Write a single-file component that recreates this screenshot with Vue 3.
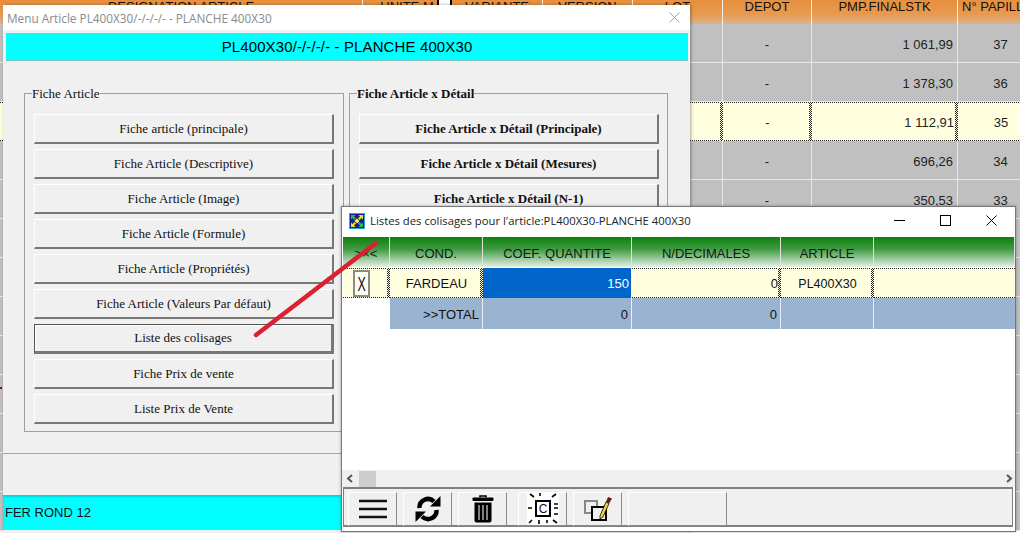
<script setup>
const bgCols = [
  { w: 363, t: 'DESIGNATION ARTICLE' },
  { w: 89, t: 'UNITE M' },
  { w: 91, t: 'VARIANTE' },
  { w: 90, t: 'VERSION' },
  { w: 90, t: 'LOT' },
  { w: 89, t: 'DEPOT' },
  { w: 146, t: 'PMP.FINALSTK' },
  { w: 86, t: 'N° PAPILLE' }
]
const bgRows = [
  ['1 061,99', '37'], ['1 378,30', '36'], ['1 112,91', '35'], ['696,26', '34'], ['350,53', '33'],
  ['', ''], ['', ''], ['', ''], ['', ''], ['', ''], ['', ''], ['', ''], ['', '']
]
const left = ['Fiche article (principale)', 'Fiche Article (Descriptive)', 'Fiche Article (Image)', 'Fiche Article (Formule)', 'Fiche Article (Propriétés)', 'Fiche Article (Valeurs Par défaut)', 'Liste des colisages', 'Fiche Prix de vente', 'Liste Prix de Vente']
const right = ['Fiche Article x Détail (Principale)', 'Fiche Article x Détail (Mesures)', 'Fiche Article x Détail (N-1)', '', '', '', '', '', '']
const heads = ['>×<', 'COND.', 'COEF. QUANTITE', 'N/DECIMALES', 'ARTICLE', '']
</script>

<template>
  <div class="desk">
    <div class="bg-grid">
      <div class="bg-head">
        <div v-for="c in bgCols" :key="c.t" class="bg-hcell" :style="{ width: c.w + 'px' }">{{ c.t }}</div>
      </div>
      <div v-for="(r, i) in bgRows" :key="i" class="bg-row" :class="{ cur: i === 2 }">
        <div class="bg-cell" v-for="n in 5" :key="n" :style="{ width: bgCols[n - 1].w + 'px' }"></div>
        <div class="bg-cell center" :style="{ width: bgCols[5].w + 'px' }">{{ r[0] ? '-' : '' }}</div>
        <div class="bg-cell num" :style="{ width: bgCols[6].w + 'px' }">{{ r[0] }}</div>
        <div class="bg-cell center" :style="{ width: bgCols[7].w + 'px' }">{{ r[1] }}</div>
      </div>
    </div>
    <span class="check"></span>
    <span class="redmark"></span>

    <section class="menu-win">
      <header class="menu-title">
        <span>Menu Article PL400X30/-/-/-/- - PLANCHE 400X30</span>
        <svg class="menu-x" width="11" height="11" viewBox="0 0 11 11"><path d="M.5.5l10 10M10.5.5l-10 10" stroke="#a0a0a0" fill="none"/></svg>
      </header>
      <div class="menu-body">
        <div class="band">PL400X30/-/-/-/- - PLANCHE 400X30</div>
        <div class="groups">
          <fieldset class="group g1">
            <legend>Fiche Article</legend>
            <button v-for="b in left" :key="b" class="btn" :class="{ focus: b === 'Liste des colisages' }">{{ b }}</button>
          </fieldset>
          <fieldset class="group g2">
            <legend class="bold">Fiche Article x Détail</legend>
            <button v-for="(b, i) in right" :key="i" class="btn bold">{{ b }}</button>
          </fieldset>
        </div>
        <div class="sep"></div>
        <div class="footer">FER ROND 12</div>
      </div>
    </section>

    <section class="col-win">
      <header class="col-title">
        <svg class="app-ico" width="16" height="16" viewBox="0 0 16 16">
          <rect width="16" height="16" fill="#12248c"/>
          <rect x=".5" y=".5" width="15" height="15" fill="none" stroke="#2aa6d8"/>
          <path d="M2 2h4.500L5 3.500l2 2L5.500 7l-2-2L2 6.500z" fill="#35b54a"/>
          <path d="M14 2v4.500L12.500 5l-2 2L9 5.500l2-2L9.500 2z" fill="#f0dc30"/>
          <path d="M2 14V9.500L3.500 11l2-2L7 10.500l-2 2L6.500 14z" fill="#f0dc30"/>
          <path d="M14 14H9.500l1.500-1.500-2-2L10.500 9l2 2L14 9.500z" fill="#35b54a"/>
          <path d="M8 5.500L10.500 8 8 10.500 5.500 8z" fill="#fff04a"/>
        </svg>
        <span class="col-name">Listes des colisages pour l'article:PL400X30-PLANCHE 400X30</span>
        <div class="caps">
          <svg width="11" height="11" viewBox="0 0 11 11"><path d="M0 5.500h11" stroke="#000"/></svg>
          <svg width="11" height="11" viewBox="0 0 11 11"><rect x=".5" y=".5" width="10" height="10" fill="none" stroke="#000"/></svg>
          <svg width="11" height="11" viewBox="0 0 11 11"><path d="M.5.5l10 10M10.500.5l-10 10" stroke="#000" fill="none"/></svg>
        </div>
      </header>

      <div class="table">
        <div class="tr thead">
          <div v-for="(h, i) in heads" :key="i" class="th" :class="'c' + i">{{ h }}</div>
        </div>
        <div class="tr trow">
          <div class="td c0 dot"><span class="xbtn"><span class="xglyph">X</span></span></div>
          <div class="td c1 dot center">FARDEAU</div>
          <div class="td c2 sel num">150</div>
          <div class="td c3 dot num">0</div>
          <div class="td c4 dot center small">PL400X30</div>
          <div class="td c5"></div>
        </div>
        <div class="tr ttotal">
          <div class="td c0 blank"></div>
          <div class="td c1 num">&gt;&gt;TOTAL</div>
          <div class="td c2 num">0</div>
          <div class="td c3 num">0</div>
          <div class="td c4"></div>
          <div class="td c5"></div>
        </div>
      </div>

      <div class="hscroll">
        <svg width="8" height="9" viewBox="0 0 8 9" class="sa"><path d="M6 1L2 4.500 6 8" stroke="#555" stroke-width="2" fill="none"/></svg>
        <span class="thumb"></span>
        <svg width="8" height="9" viewBox="0 0 8 9" class="sb"><path d="M2 1l4 3.500L2 8" stroke="#555" stroke-width="2" fill="none"/></svg>
      </div>

      <div class="toolbar">
        <button class="tb" aria-label="Menu">
          <svg width="28" height="22" viewBox="0 0 28 22"><path d="M0 3h28M0 11h28M0 19h28" stroke="#111" stroke-width="2.500"/></svg>
        </button>
        <button class="tb" aria-label="Actualiser">
          <svg width="26" height="28" viewBox="0 0 26 28">
            <path d="M4.500 13A8.500 8.500 0 0 1 19 6.500" fill="none" stroke="#000" stroke-width="4.500"/>
            <path d="M15 11.500h10.500V1z" fill="#000"/>
            <path d="M21.500 15A8.500 8.500 0 0 1 7 21.500" fill="none" stroke="#000" stroke-width="4.500"/>
            <path d="M11 16.500H.5V27z" fill="#000"/>
          </svg>
        </button>
        <button class="tb" aria-label="Supprimer">
          <svg width="22" height="28" viewBox="0 0 22 28">
            <path d="M8 2.500V1h6v1.500" fill="none" stroke="#000" stroke-width="1.600"/>
            <rect x="0.500" y="2.500" width="21" height="3.500" rx="1" fill="#000"/>
            <path d="M2.500 7.500h17v18a2 2 0 0 1-2 2h-13a2 2 0 0 1-2-2z" fill="#000"/>
            <path d="M7 10v15M11 10v15M15 10v15" stroke="#d8d8d8" stroke-width="1.200"/>
          </svg>
        </button>
        <button class="tb tb2" aria-label="Capture">
          <svg width="32" height="32" viewBox="0 0 32 32">
            <rect width="32" height="32" fill="#fff"/>
            <rect x="9" y="8" width="14" height="15" fill="#fff" stroke="#000" stroke-width="2"/>
            <path d="M1 15h4M27 11h4M27 15h4M27 21h4M3 1l4 3M29 1l-4 3M2 30l3-3M30 30l-4-3M13 0v3M12 27v4M20 27v3" stroke="#000" stroke-width="1.600"/>
            <text x="16" y="20" text-anchor="middle" class="ctxt">C</text>
          </svg>
        </button>
        <button class="tb" aria-label="Modifier">
          <svg width="30" height="28" viewBox="0 0 30 28">
            <rect x="2" y="6" width="12" height="12" fill="none" stroke="#888" stroke-width="2"/>
            <rect x="9" y="12" width="14" height="13" fill="#f0f0f0" stroke="#000" stroke-width="2"/>
            <path d="M17 21l6-14 3 1.500L20 22l-3 2z" fill="#eedb2a" stroke="#000" stroke-width=".8"/>
            <path d="M23 7l2-5 4 1.500-3 5z" fill="#6b1414"/>
          </svg>
        </button>
        <button class="tb tb3"></button>
      </div>
    </section>

    <svg class="arrow" width="1020" height="533" viewBox="0 0 1020 533">
      <path d="M256 335L376 243" stroke="#db2032" stroke-width="4.500" stroke-linecap="round" fill="none"/>
    </svg>
  </div>
</template>

<style>
html, body { margin: 0; padding: 0; overflow: hidden; background: #fff; }
</style>

<style scoped>
.desk {
  position: relative;
  width: 1020px;
  height: 533px;
  overflow: hidden;
  font-family: "Liberation Sans", Arial, sans-serif;
  font-size: 13px;
  color: #111;
}
.bg-grid { display: flex; flex-direction: column; width: 1044px; }
.bg-head { display: flex; height: 24px; flex: none; background: linear-gradient(#e78f3c 0%, #e89a50 60%, #d8b48e 100%); }
.bg-hcell {
  box-sizing: border-box;
  flex: none;
  border-right: 1px solid #f4efe8;
  text-align: center;
  font-size: 13px;
  line-height: 14px;
  white-space: nowrap;
  overflow: hidden;
}
.bg-hcell:last-child { text-align: left; padding-left: 4px; }
.bg-row { display: flex; height: 39px; background: #c0c0c0; box-sizing: border-box; border-bottom: 1px solid #e8e8e8; flex: none; }
.bg-row.cur {
  border-bottom: 0;
  background:
    repeating-linear-gradient(90deg, #222 0 1px, #ffffe0 1px 2px) top / 100% 1px no-repeat,
    repeating-linear-gradient(90deg, #222 0 1px, #ffffe0 1px 2px) bottom / 100% 1px no-repeat,
    #ffffe0;
}
.bg-cell {
  box-sizing: border-box;
  flex: none;
  position: relative;
  border-right: 1px solid #e8e8e8;
  line-height: 42px;
  height: 38px;
  font-size: 13px;
  color: #222;
}
.bg-row.cur .bg-cell { height: 39px; border-right: 0; }
.bg-row.cur .bg-cell::after, .dot::after {
  content: "";
  position: absolute;
  right: 0;
  top: 0;
  bottom: 0;
  width: 3px;
  background: repeating-conic-gradient(#222 0 25%, #ffffe0 0 50%) 0 0 / 2px 2px;
}
.bg-cell.center { text-align: center; }
.bg-cell.num { text-align: right; padding-right: 4px; }
.check {
  position: absolute;
  left: 437px;
  top: -7px;
  width: 11px;
  height: 11px;
  border: 2px solid #000;
  background: #fff;
}
.redmark { position: absolute; left: 0; top: 387px; width: 2px; height: 2px; background: #8c1010; }

.menu-win {
  position: absolute;
  left: 3px;
  top: 5px;
  width: 687px;
  height: 528px;
  background: #f0f0f0;
  box-shadow: 1px 0 3px rgba(0, 0, 0, .35);
}
.menu-title {
  height: 25px;
  background: #fff;
  display: flex;
  align-items: center;
  justify-content: space-between;
  padding: 0 6px 0 4px;
  font-family: "Open Sans", sans-serif;
  font-size: 11.8px;
  color: #8a8a8a;
}
.menu-x { margin-right: 4px; margin-top: -1px; }
.menu-body { display: flex; flex-direction: column; height: 503px; }
.band {
  flex: none;
  height: 28px;
  margin: 3px 2px 0 3px;
  background: #00ffff;
  border-bottom: 1px solid #7fbcbc;
  box-sizing: border-box;
  text-align: center;
  line-height: 28px;
  font-size: 15px;
  letter-spacing: .12px;
  color: #000;
}
.groups { flex: none; display: flex; height: 392px; padding: 0 0 0 21px; gap: 5px; align-items: flex-start; }
.group {
  box-sizing: border-box;
  margin: 25px 0 0;
  padding: 13px 9px 0;
  border: 1px solid #a0a0a0;
  display: flex;
  flex-direction: column;
  gap: 5px;
  min-width: 0;
  height: 346px;
  font-family: "Liberation Serif", serif;
  font-size: 13px;
}
.g1 { width: 320px; }
.g2 { width: 319px; }
.group legend { padding: 0; margin-left: -2px; font-size: 13px; color: #111; line-height: 15px; }
.bold { font-weight: 700; }
.btn {
  flex: none;
  box-sizing: border-box;
  width: 300px;
  height: 30px;
  padding: 0;
  background: #f0f0f0;
  border: 1px solid;
  border-color: #fff #777 #777 #fff;
  border-width: 1px 2px 2px 1px;
  font-family: "Liberation Serif", serif;
  font-size: 13px;
  color: #111;
  text-align: center;
}
.btn.focus { border-color: #555 #777 #777 #555; border-width: 1px 3px 3px 1px; box-shadow: inset 1px 1px 0 #fff; }
.sep { flex: none; border-top: 1px solid #a8a8a8; }
.footer {
  flex: none;
  margin-top: 41px;
  height: 35px;
  background: #00ffff;
  line-height: 36px;
  padding-left: 2px;
  font-size: 13px;
  color: #111;
  box-shadow: inset 0 2px 2px rgba(0, 90, 90, .25);
}

.col-win {
  position: absolute;
  left: 341px;
  top: 206px;
  width: 675px;
  height: 326px;
  box-sizing: border-box;
  background: #fff;
  border: 1px solid #777;
  display: flex;
  flex-direction: column;
  box-shadow: 0 0 3px rgba(0, 0, 0, .3);
}
.col-title { flex: none; box-sizing: border-box; height: 30px; display: flex; align-items: center; padding: 0 0 3px 7px; background: #fff; }
.app-ico { flex: none; }
.col-name { margin-left: 5px; font-family: "Open Sans", sans-serif; font-size: 11.3px; color: #222; white-space: nowrap; }
.caps { margin-left: auto; display: flex; gap: 35px; padding-right: 18px; }
.caps svg { display: block; }

.table { flex: none; display: flex; flex-direction: column; margin-left: 1px; height: 233px; }
.tr { display: flex; flex: none; }
.c0 { width: 47px; }
.c1 { width: 93px; }
.c2 { width: 149px; }
.c3 { width: 149px; }
.c4 { width: 93px; }
.c5 { width: 141px; }
.th, .td { box-sizing: border-box; flex: none; font-size: 13px; color: #111; position: relative; }
.thead { height: 31px; }
.th {
  height: 30px;
  background: linear-gradient(#0a800a 0%, #3f9a42 40%, #e6f0e6 100%);
  border-right: 1px solid #e0e0e0;
  text-align: center;
  line-height: 33px;
  color: #0c1c0c;
}
.trow { height: 30px; }
.trow .td {
  height: 30px;
  line-height: 31px;
  background:
    repeating-linear-gradient(90deg, #222 0 1px, #ffffe0 1px 2px) top / 100% 1px no-repeat,
    repeating-linear-gradient(90deg, #222 0 1px, #ffffe0 1px 2px) bottom / 100% 1px no-repeat,
    #ffffe0;
}
.trow .td.sel { background: #0066cc; color: #fff; border-right: 1px solid #f4f4f4; padding-right: 2px; }
.trow .td.small { font-size: 12.5px; line-height: 32px; }
.center { text-align: center; }
.num { text-align: right; padding-right: 3px; }
.xbtn {
  display: block;
  box-sizing: border-box;
  width: 17px;
  height: 27px;
  margin: 2px 0 0 10px;
  border: 2px solid #8c8c84;
  background: #fffff4;
  line-height: 24px;
  text-align: center;
  font-size: 20px;
  overflow: hidden;
}
.xglyph { display: inline-block; transform: scaleX(.62); font-weight: 400; color: #111; }
.ttotal { height: 32px; }
.ttotal .td { height: 31px; background: #9ab3d1; border-right: 1px solid #e8eef5; line-height: 34px; }
.ttotal .td.blank { background: #fff; border: 0; }
.ttotal .c5 { border-right: 0; }

.hscroll { flex: none; height: 17px; background: #f0f0f0; display: flex; align-items: center; }
.sa { margin-left: 4px; }
.thumb { width: 17px; height: 16px; margin-left: 5px; background: #cdcdcd; }
.sb { margin-left: auto; margin-right: 2px; }
.toolbar {
  flex: none;
  box-sizing: border-box;
  height: 40px;
  margin: 0 2px 0 1px;
  padding: 3px 0 0 4px;
  display: flex;
  gap: 6px;
  background: #f0f0f0;
  border: 1px solid #808080;
  border-width: 2px 1px 2px 1px;
}
.tb {
  flex: none;
  box-sizing: border-box;
  width: 49px;
  height: 34px;
  padding: 0;
  background: #f0f0f0;
  border: 1px solid;
  border-color: #fff #8a8a8a #8a8a8a #fff;
  display: flex;
  align-items: center;
  justify-content: center;
}
.tb2 { margin-left: 5px; }
.tb3 { width: 99px; }
.ctxt { font-family: "Liberation Sans", sans-serif; font-size: 12px; fill: #111; }
.arrow { position: absolute; left: 0; top: 0; pointer-events: none; }
</style>
